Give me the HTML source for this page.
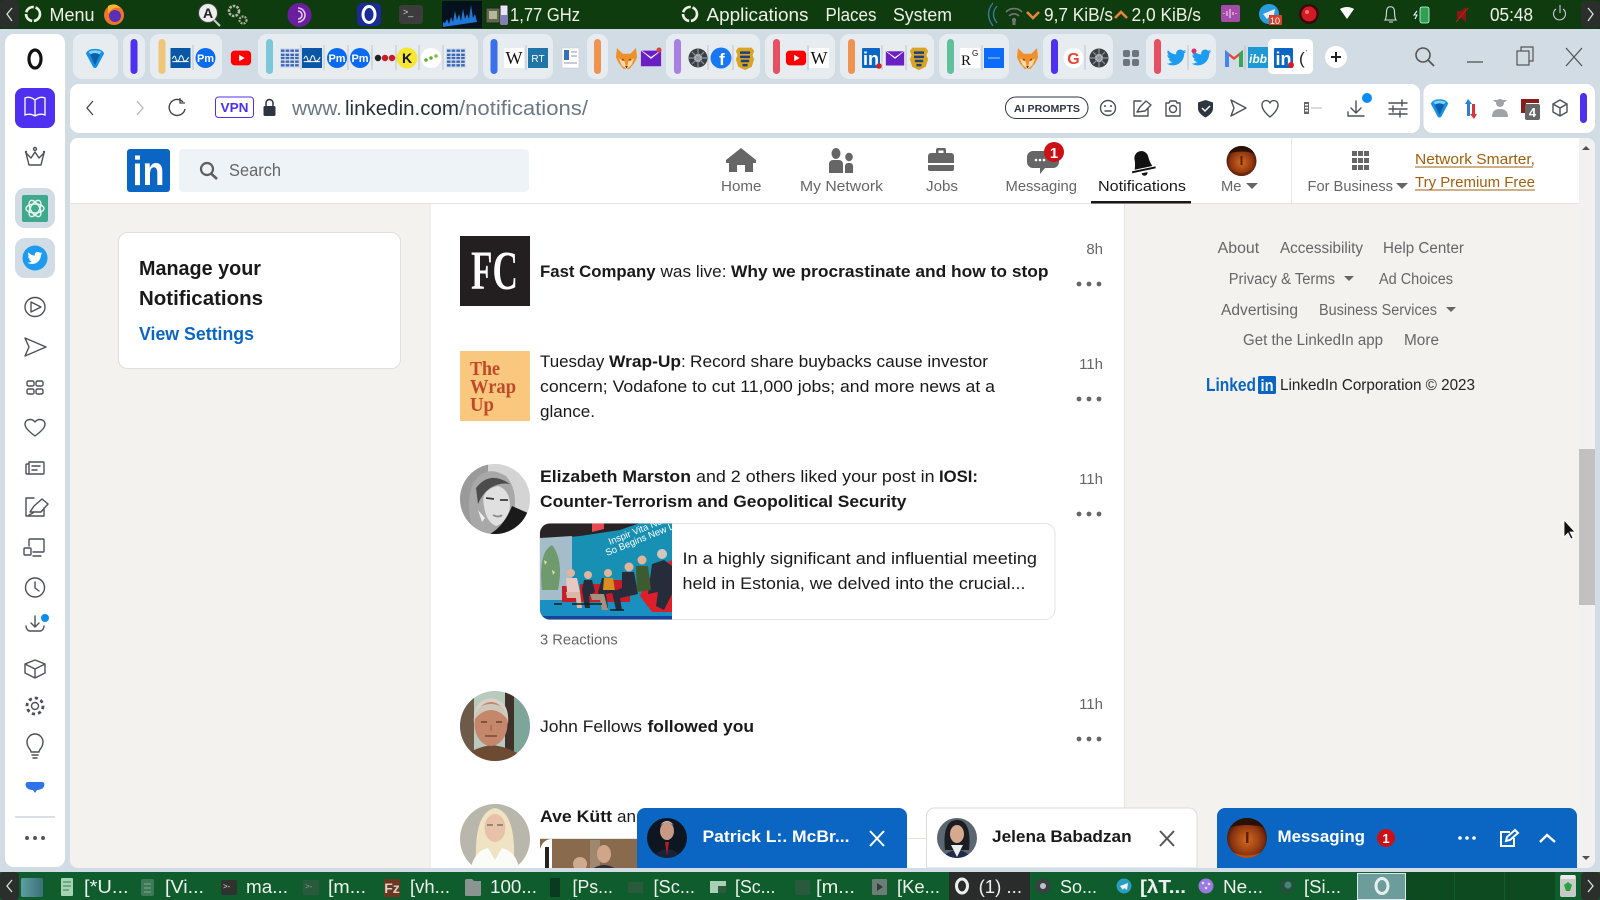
<!DOCTYPE html>
<html><head><meta charset="utf-8"><title>LinkedIn Notifications</title>
<style>
html,body{margin:0;padding:0;width:1600px;height:900px;overflow:hidden;background:#d2dce5}
svg{display:block;position:absolute;left:0;top:0}
text{font-family:"Liberation Sans","DejaVu Sans",sans-serif;white-space:pre}
.b{font-weight:700}
.t{fill:#191919;font-size:17px}
.tb{fill:#191919;font-size:17px;font-weight:700}
.nav{fill:#666;font-size:15px}
.fl{fill:#666;font-size:15.5px}
.tm{fill:#666;font-size:15px}
.pan{fill:#f0f0e8;font-size:18px}
.tsk{fill:#eef2ee;font-size:18px}
.ic{fill:none;stroke:#4c5159;stroke-width:1.4;stroke-linecap:round;stroke-linejoin:round}
.sep{stroke:#aab4bd;stroke-width:.7}
</style></head><body>
<svg width="1600" height="900" viewBox="0 0 1600 900" xmlns="http://www.w3.org/2000/svg">
<defs>
<symbol id="tw" viewBox="0 0 24 24"><path d="M23 4.900c-.8.4-1.700.6-2.600.8.900-.6 1.600-1.400 2-2.500-.9.500-1.800.9-2.900 1.100C18.700 3.400 17.500 2.800 16.200 2.800c-2.500 0-4.600 2.100-4.600 4.600 0 .4 0 .7.100 1C7.800 8.200 4.500 6.400 2.200 3.600c-.4.700-.6 1.400-.6 2.300 0 1.600.8 3 2 3.800-.8 0-1.500-.2-2.100-.6v.1c0 2.200 1.600 4.100 3.700 4.500-.4.100-.8.200-1.200.2-.3 0-.6 0-.9-.1.600 1.800 2.300 3.200 4.300 3.200-1.600 1.200-3.600 2-5.700 2-.4 0-.7 0-1.100-.1 2 1.300 4.500 2.100 7.100 2.100 8.500 0 13.100-7 13.100-13.100v-.6c.9-.6 1.700-1.500 2.300-2.400z"/></symbol>
<symbol id="fox" viewBox="0 0 24 24"><path d="M2 1 L8 7 H16 L22 1 L23 11 L20 17 L15 23 H9 L4 17 L1 11Z" fill="#f0902a"/><path d="M4 12 L10 15 L12 23 L14 15 L20 12 L17 19 L12 23 L7 19Z" fill="#fbd9a8"/><path d="M8 12l2 2-3 0zM16 12l-2 2 3 0z" fill="#6a3a10"/><path d="M10.500 20h3l-1.500 2z" fill="#33210f"/></symbol>
<symbol id="gem" viewBox="0 0 24 24"><path d="M2 7 Q4 2 12 2 Q20 2 22 7 L14 22 Q12 24 10 22Z" fill="#1492e6"/><path d="M6 7 Q12 4 18 7 L12 20Z" fill="#0d5fa8"/><path d="M5 5 Q12 2 19 5 L17 8 Q12 5 7 8Z" fill="#7fd4fa"/></symbol>
<symbol id="shd" viewBox="0 0 24 30"><path d="M4 2h16l3 4-2 5 2 5-3 9-8 4-8-4-3-9 2-5-2-5z" fill="#d9a520"/><path d="M6 8h12M6 13h12M7 18h10M9 23h6" stroke="#1d3e80" stroke-width="3"/></symbol>
<symbol id="mail" viewBox="0 0 24 24"><rect x="1" y="4" width="22" height="17" fill="#6a1fc4"/><path d="M1 4 L12 13 L23 4Z" fill="#fff"/><path d="M2 4 L12 11 L22 4Z" fill="#6a1fc4"/></symbol>
<symbol id="yt" viewBox="0 0 24 24"><rect x="1" y="4" width="22" height="16" rx="4" fill="#f00"/><path d="M10 8.500 L16 12 L10 15.500Z" fill="#fff"/></symbol>
<symbol id="wav" viewBox="0 0 22 22"><rect width="22" height="22" fill="#0a57a8"/><path d="M2 12c2-4 3-4 4 0s3 3 4-1 3-3 4 1 3 3 6-2M2 15h18" stroke="#fff" stroke-width="1.100" fill="none"/></symbol>
<symbol id="pat" viewBox="0 0 22 22"><rect width="22" height="22" fill="#d5dfef"/><path d="M1 3h20M1 7.500h20M1 11h20M1 15h20M1 19h20" stroke="#3f68b4" stroke-width="2.600" stroke-dasharray="4 1.200"/></symbol>
<symbol id="film" viewBox="0 0 22 22"><circle cx="12" cy="11" r="9.500" fill="#3a3f44"/><circle cx="12" cy="11" r="4" fill="#c6cbd0"/><path d="M12 2v18M3 11h18M6 5l12 12M18 5L6 17" stroke="#8d949a" stroke-width="1.200"/></symbol>
<clipPath id="pg"><rect x="70" y="138" width="1525" height="730" rx="8"/></clipPath>
<clipPath id="cE"><ellipse cx="495" cy="499" rx="35" ry="35"/></clipPath>
<clipPath id="cJ"><ellipse cx="495" cy="726" rx="35" ry="35"/></clipPath>
<clipPath id="cA"><ellipse cx="495" cy="839" rx="35" ry="35"/></clipPath>
<clipPath id="cI"><path d="M550 523.500H672V619.500H550a10 10 0 0 1-10-10V533.500a10 10 0 0 1 10-10Z"/></clipPath>
<clipPath id="cP"><circle cx="667" cy="838" r="20"/></clipPath>
<clipPath id="cB"><circle cx="957" cy="838" r="20"/></clipPath>
<clipPath id="cM"><circle cx="1247" cy="838" r="20"/></clipPath>
<clipPath id="cU"><circle cx="1241.500" cy="161" r="15"/></clipPath>
<radialGradient id="face" cx=".5" cy=".55" r=".6"><stop offset="0" stop-color="#d56a1e"/><stop offset=".65" stop-color="#8a3310"/><stop offset="1" stop-color="#1f0c05"/></radialGradient>
<linearGradient id="teal" x1="0" x2="1"><stop offset="0" stop-color="#5f9ea0"/><stop offset="1" stop-color="#3c6f78"/></linearGradient>
</defs>

<rect width="1600" height="900" fill="#d2dce5"/>

<!-- TOP PANEL -->
<rect width="1600" height="29" fill="#0e3c0e"/>
<rect x="0" y="0" width="19" height="28" rx="4" fill="#2b2f2b"/>
<path d="M12 8 L7 14 L12 21" stroke="#ddd" stroke-width="1.300" fill="none"/>
<circle cx="33" cy="14" r="7" fill="none" stroke="#f0f0e8" stroke-width="2.600" stroke-dasharray="10 1.800"/>
<text class="pan" x="49.500" y="21" textLength="45" lengthAdjust="spacingAndGlyphs">Menu</text>
<circle cx="114" cy="15" r="10" fill="#f0742a"/><circle cx="115" cy="16" r="6" fill="#5a2fb8"/><path d="M108 6 Q116 2 120 8 Q112 6 108 14Z" fill="#ffb52a"/>
<circle cx="208" cy="13" r="9.500" fill="#eee" stroke="#444" stroke-width="1"/><text x="208" y="18" text-anchor="middle" class="b" font-size="14" fill="#222">A</text><path d="M214 20 L220 26" stroke="#ccc" stroke-width="2"/>
<circle cx="234" cy="11" r="5" fill="none" stroke="#b5b5a8" stroke-width="2.600" stroke-dasharray="2.500 1.200"/><circle cx="243" cy="20" r="3.500" fill="none" stroke="#a9a99c" stroke-width="2.200" stroke-dasharray="2 1"/>
<circle cx="299.500" cy="15" r="12" fill="#6b1f9e"/><path d="M298 8a7 7 0 0 1 0 14M298 11a4 4 0 0 1 0 8" stroke="#e0c8f0" stroke-width="1.600" fill="none"/>
<rect x="357" y="3" width="24" height="23" rx="5" fill="#1a2a9a"/><ellipse cx="369" cy="14.500" rx="6" ry="8" fill="none" stroke="#fff" stroke-width="3"/>
<rect x="399" y="5" width="24" height="19" rx="3" fill="#3c3c3c"/><text x="403" y="15" font-size="9" fill="#ddd">&gt;_</text>
<rect x="442" y="1" width="40" height="27" fill="#05121e"/>
<path d="M443 27V22l2 1 2-4 2 5 2-7 2 5 2-11 2 9 2-6 2 7 2-12 2 10 2-5 2 5 2-14 2 13 2-4 2 8z" fill="#1e78d8"/>
<rect x="486" y="8" width="14" height="15" fill="#5f6a4a" stroke="#222"/><rect x="489" y="11" width="8" height="8" fill="#b5b89a"/>
<rect x="500" y="5" width="8" height="20" fill="#e8e8f4" stroke="#222"/><rect x="501" y="15" width="6" height="9" fill="#7f7fc0"/>
<text class="pan" x="510" y="21" textLength="70" lengthAdjust="spacingAndGlyphs">1,77 GHz</text>
<circle cx="690" cy="14" r="7" fill="none" stroke="#f0f0e8" stroke-width="2.600" stroke-dasharray="10 1.800"/>
<text class="pan" x="706.500" y="21" textLength="102" lengthAdjust="spacingAndGlyphs">Applications</text>
<text class="pan" x="825.500" y="21" textLength="51" lengthAdjust="spacingAndGlyphs">Places</text>
<text class="pan" x="893" y="21" textLength="59" lengthAdjust="spacingAndGlyphs">System</text>
<path d="M993 3Q984 14 993 26M997 6Q990 14 997 23" stroke="#3c7ba8" stroke-width="1.300" fill="none"/>
<path d="M1006 12a11 11 0 0 1 16 0M1009 16a7 7 0 0 1 10 0" stroke="#777" stroke-width="1.600" fill="none"/><circle cx="1014" cy="20" r="2" fill="#777"/><rect x="1012.500" y="21" width="3" height="4" fill="#777"/>
<path d="M1027 12 L1033 18 L1039 12" stroke="#e8843a" stroke-width="2.600" fill="none"/>
<text class="pan" x="1044" y="21" textLength="69" lengthAdjust="spacingAndGlyphs">9,7 KiB/s</text>
<path d="M1115 18 L1121 12 L1127 18" stroke="#e8843a" stroke-width="2.600" fill="none"/>
<text class="pan" x="1131.500" y="21" textLength="69.500" lengthAdjust="spacingAndGlyphs">2,0 KiB/s</text>
<rect x="1221" y="5" width="19" height="17" rx="2" fill="#a44ca8"/><path d="M1224 14v-1M1227 16v-5M1230 18v-9M1233 15v-3M1236 14v-1" stroke="#e8d0f0" stroke-width="1.200"/>
<circle cx="1269" cy="14" r="10" fill="#2a9de0"/><path d="M1263 14l12-5-2 11-4-3-2 2z" fill="#eee"/><rect x="1269" y="15" width="13" height="10" fill="#d8402c"/><text x="1270" y="24" font-size="9" fill="#fff">10</text>
<circle cx="1309" cy="14" r="10" fill="#3a0a0a"/><circle cx="1309" cy="14" r="7.500" fill="#d01a24"/><circle cx="1307" cy="12" r="2" fill="#f07078"/>
<path d="M1340 9 Q1347 5 1354 9 L1347 19Z" fill="#fff"/>
<path d="M1385 20c2-2 1-9 2-11 1-3 6-3 7 0 1 2 0 9 2 11zM1389 22h4" stroke="#dde" stroke-width="1.100" fill="none"/>
<rect x="1420" y="7" width="9" height="16" rx="2" fill="#2fa050" stroke="#cfe" stroke-width=".8"/><path d="M1417 11l-3 4h3l-2 4" stroke="#dff" stroke-width="1.100" fill="none"/>
<path d="M1457 11h4l5-4v15l-5-4h-4z" fill="#8a1616"/><path d="M1468 8 L1456 22" stroke="#c01c1c" stroke-width="1.100"/>
<text class="pan" x="1490" y="21" textLength="43" lengthAdjust="spacingAndGlyphs">05:48</text>
<path d="M1556 9a6 6 0 1 0 7 0M1560 5v8" stroke="#ccd" stroke-width="1.100" fill="none"/>
<rect x="1581" y="1" width="19" height="27" rx="4" fill="#2b2f2b"/><path d="M1588 8 L1593 14 L1588 21" stroke="#ddd" stroke-width="1.300" fill="none"/>

<!-- TAB GROUPS -->
<g fill="#e7ecf0">
<rect x="73" y="34" width="45" height="45" rx="9"/>
<rect x="123" y="34" width="22" height="45" rx="9"/>
<rect x="150" y="34" width="72" height="45" rx="9"/>
<rect x="258" y="34" width="220" height="45" rx="9"/>
<rect x="483" y="34" width="70" height="45" rx="9"/>
<rect x="587" y="34" width="21" height="45" rx="9"/>
<rect x="666" y="34" width="94" height="45" rx="9"/>
<rect x="765" y="34" width="70" height="45" rx="9"/>
<rect x="840" y="34" width="94" height="45" rx="9"/>
<rect x="939" y="34" width="70" height="45" rx="9"/>
<rect x="1043" y="34" width="70" height="45" rx="9"/>
<rect x="1146" y="34" width="70" height="45" rx="9"/>
</g>
<rect x="130.500" y="39" width="7" height="35" rx="3.500" fill="#4f2ff0"/>
<rect x="158.500" y="39" width="7" height="35" rx="3.500" fill="#efc578"/>
<rect x="266" y="39" width="7" height="35" rx="3.500" fill="#7cc8d8"/>
<rect x="490.500" y="39" width="7" height="35" rx="3.500" fill="#3a70ea"/>
<rect x="594" y="39" width="7" height="35" rx="3.500" fill="#ef9450"/>
<rect x="674" y="39" width="7" height="35" rx="3.500" fill="#a880e0"/>
<rect x="773" y="39" width="7" height="35" rx="3.500" fill="#e55062"/>
<rect x="848" y="39" width="7" height="35" rx="3.500" fill="#ef9450"/>
<rect x="947" y="39" width="7" height="35" rx="3.500" fill="#5fc09a"/>
<rect x="1051" y="39" width="7" height="35" rx="3.500" fill="#4f2ff0"/>
<rect x="1154" y="39" width="7" height="35" rx="3.500" fill="#e55062"/>
<use href="#gem" x="84" y="47" width="22" height="22"/>
<use href="#wav" x="170.500" y="48" width="20" height="20"/><line class="sep" x1="193" x2="193" y1="45" y2="70"/>
<circle cx="205.500" cy="58" r="10" fill="#0b6bf0"/><text x="205.500" y="62" text-anchor="middle" font-size="11" class="b" fill="#fff">Pm</text>
<use href="#yt" x="230" y="47" width="22" height="22"/>
<use href="#pat" x="280" y="48" width="20" height="20"/><line class="sep" x1="301" x2="301" y1="45" y2="70"/>
<use href="#wav" x="302" y="48" width="20" height="20"/><line class="sep" x1="324" x2="324" y1="45" y2="70"/>
<circle cx="337" cy="58" r="10" fill="#0b6bf0"/><text x="337" y="62" text-anchor="middle" font-size="11" class="b" fill="#fff">Pm</text><line class="sep" x1="348" x2="348" y1="45" y2="70"/>
<circle cx="360" cy="58" r="10" fill="#0b6bf0"/><text x="360" y="62" text-anchor="middle" font-size="11" class="b" fill="#fff">Pm</text><line class="sep" x1="372" x2="372" y1="45" y2="70"/>
<circle cx="378" cy="58" r="3.200" fill="#222"/><circle cx="385" cy="58" r="3.200" fill="#c81d25"/><circle cx="392" cy="58" r="3.200" fill="#c81d25"/><line class="sep" x1="396" x2="396" y1="45" y2="70"/>
<circle cx="407" cy="58" r="10.500" fill="#f7e733"/><text x="407" y="63" text-anchor="middle" font-size="14" class="b" fill="#111">K</text><line class="sep" x1="419" x2="419" y1="45" y2="70"/>
<circle cx="431" cy="58" r="10" fill="#fff"/><circle cx="426" cy="60" r="1.800" fill="#6a3"/><circle cx="431" cy="58" r="1.800" fill="#6a3"/><circle cx="436" cy="56" r="1.800" fill="#8b4"/><line class="sep" x1="443" x2="443" y1="45" y2="70"/>
<use href="#pat" x="446" y="48" width="20" height="20"/>
<rect x="504" y="48" width="20" height="20" fill="#fff"/><text x="514" y="64" text-anchor="middle" font-size="18" fill="#111" style="font-family:'Liberation Serif',serif">W</text><line class="sep" x1="526" x2="526" y1="45" y2="70"/>
<rect x="528" y="48" width="20" height="20" fill="#1f74a8"/><text x="538" y="62" text-anchor="middle" font-size="10" fill="#fff">RT</text>
<rect x="562" y="48" width="17" height="20" fill="#fff" stroke="#ccd" stroke-width=".6"/><rect x="564" y="50" width="5" height="10" fill="#3a70b8"/><path d="M571 52h6M571 56h6M564 63h13" stroke="#aab" stroke-width="1.200"/>
<use href="#fox" x="615" y="47" width="23" height="23"/>
<use href="#mail" x="640" y="47" width="22" height="22"/><circle cx="659" cy="50" r="2.500" fill="#d84040"/>
<use href="#film" x="686" y="47" width="22" height="22"/><line class="sep" x1="708" x2="708" y1="45" y2="70"/>
<circle cx="721" cy="58" r="10.500" fill="#1877f2"/><text x="722" y="65" text-anchor="middle" font-size="17" class="b" fill="#fff">f</text><line class="sep" x1="733" x2="733" y1="45" y2="70"/>
<use href="#shd" x="735" y="46" width="20" height="25"/>
<use href="#yt" x="785" y="47" width="22" height="22"/><line class="sep" x1="808" x2="808" y1="45" y2="70"/>
<rect x="809" y="48" width="20" height="20" fill="#fff"/><text x="819" y="64" text-anchor="middle" font-size="18" fill="#111" style="font-family:'Liberation Serif',serif">W</text>
<rect x="862" y="48" width="18" height="20" rx="1" fill="#0a66c2"/><text x="871" y="65" text-anchor="middle" font-size="18" class="b" fill="#fff">in</text><circle cx="879" cy="66" r="2.800" fill="#d81f26"/><line class="sep" x1="882" x2="882" y1="45" y2="70"/>
<use href="#mail" x="885" y="48" width="20" height="20"/><line class="sep" x1="906" x2="906" y1="45" y2="70"/>
<use href="#shd" x="909" y="46" width="20" height="25"/>
<rect x="960" y="48" width="20" height="20" fill="#fff"/><text x="961" y="65" font-size="15" fill="#111" style="font-family:'Liberation Serif',serif">R</text><text x="972" y="56" font-size="8" fill="#111">G</text><line class="sep" x1="982" x2="982" y1="45" y2="70"/>
<rect x="984" y="48" width="20" height="20" fill="#0b6bfb"/><path d="M988 58h12" stroke="#bcd" stroke-width="1"/>
<use href="#fox" x="1016" y="47" width="23" height="23"/>
<circle cx="1073.500" cy="58" r="10" fill="#fff"/><text x="1073.500" y="64" text-anchor="middle" font-size="16" class="b" fill="#ea4335">G</text><line class="sep" x1="1085" x2="1085" y1="45" y2="70"/>
<use href="#film" x="1087" y="47" width="22" height="22"/>
<g fill="#6d747b"><rect x="1123" y="50" width="7" height="7" rx="2"/><rect x="1132" y="50" width="7" height="7" rx="2"/><rect x="1123" y="59" width="7" height="7" rx="2"/><rect x="1132" y="59" width="7" height="7" rx="2"/></g>
<use href="#tw" x="1166" y="47" width="21" height="21" fill="#1d9bf0"/><line class="sep" x1="1188" x2="1188" y1="45" y2="70"/>
<use href="#tw" x="1191" y="47" width="21" height="21" fill="#1d9bf0"/><circle cx="1194" cy="51" r="2.500" fill="#e0306a"/>
<path d="M1225 67V50l9 7 9-7v17h-4V56l-5 4-5-4v11z" fill="#ea4335"/><path d="M1225 50v17h4V53z" fill="#4285f4"/><path d="M1243 50v17h-4V53z" fill="#34a853"/><line class="sep" x1="1245" x2="1245" y1="45" y2="70"/>
<rect x="1248" y="47" width="20" height="21" fill="#1d9ad6"/><text x="1258" y="63" text-anchor="middle" font-size="12" class="b" font-style="italic" fill="#fff">ibb</text>
<rect x="1268" y="39" width="45" height="35" rx="5" fill="#fff"/>
<rect x="1274" y="48" width="19" height="20" rx="1" fill="#0a66c2"/><text x="1283.500" y="65" text-anchor="middle" font-size="18" class="b" fill="#fff">in</text><circle cx="1291" cy="65" r="3" fill="#d81f26"/>
<text x="1299" y="64" font-size="17" fill="#222">(</text><text x="1306" y="55" font-size="7" fill="#555">'</text>
<circle cx="1336" cy="57" r="11" fill="#fff"/><path d="M1331 57h10M1336 52v10" stroke="#222" stroke-width="2"/>
<circle cx="1423" cy="55" r="7" fill="none" stroke="#555" stroke-width="1.600"/><path d="M1428 60 L1434 66" stroke="#555" stroke-width="1.800"/>
<path d="M1467 62h16" stroke="#555" stroke-width="1.300"/>
<rect x="1517" y="51" width="12" height="14" fill="none" stroke="#555" stroke-width="1.200"/><path d="M1521 51v-4h12v14h-4" fill="none" stroke="#555" stroke-width="1.200"/>
<path d="M1566 48 L1582 66M1582 48 L1566 66" stroke="#555" stroke-width="1.300"/>

<!-- SIDEBAR -->
<rect x="5" y="34" width="60" height="833" rx="9" fill="#fff"/>
<ellipse cx="35" cy="59" rx="6" ry="9" fill="none" stroke="#111" stroke-width="3.200"/>
<rect x="15" y="88" width="40" height="40" rx="8" fill="#4f2ff0"/>
<path d="M35 100 Q30 96 25 98V115Q30 113 35 116Q40 113 45 115V98Q40 96 35 100ZM35 100V116" fill="none" stroke="#fff" stroke-width="1.300"/>
<path class="ic" d="M26 153 L29 165 H41 L44 153 L39 158 L35 152 L31 158 Z"/><circle class="ic" cx="35" cy="149" r="1.500"/><circle cx="26" cy="152" r="1.200" fill="#4c5159"/><circle cx="44" cy="152" r="1.200" fill="#4c5159"/>
<rect x="15" y="188" width="40" height="40" rx="10" fill="#d2dce5"/>
<rect x="22" y="195" width="26" height="27" rx="2" fill="#3fa98d"/>
<g fill="none" stroke="#e8f6f0" stroke-width="1.400"><ellipse cx="35" cy="208.500" rx="9" ry="4.500"/><ellipse cx="35" cy="208.500" rx="9" ry="4.500" transform="rotate(60 35 208.500)"/><ellipse cx="35" cy="208.500" rx="9" ry="4.500" transform="rotate(120 35 208.500)"/></g>
<rect x="15" y="238" width="40" height="40" rx="10" fill="#d2dce5"/>
<circle cx="35" cy="258" r="12.500" fill="#1d9bf0"/><use href="#tw" x="27" y="250" width="16" height="16" fill="#fff"/>
<ellipse class="ic" cx="35" cy="307" rx="10" ry="9.500"/><path class="ic" d="M31 302 L41 307 L31 312Z"/>
<path class="ic" d="M25 338 L46 347 L25 356 L29 347 Z"/>
<g class="ic"><rect x="27" y="381" width="7" height="5" rx="1.500"/><rect x="36" y="381" width="7" height="5" rx="1.500"/><rect x="27" y="389" width="7" height="5" rx="1.500"/><rect x="36" y="389" width="7" height="5" rx="1.500"/></g>
<path class="ic" d="M35 436 C27 430 25 427 25 424 C25 419 32 418 35 422 C38 418 45 419 45 424 C45 427 43 430 35 436Z"/>
<path class="ic" d="M29 462h14a1 1 0 0 1 1 1v10a1 1 0 0 1-1 1H29zM29 464h-2a1 1 0 0 0-1 1v8a1 1 0 0 0 1 1h2M32 466h8M32 470h5"/>
<path class="ic" d="M34 498H26V516H44V508M30 512l4-6 8-7 6 5-7 8zM33 513l-4 2"/>
<path class="ic" d="M29 546V540a1 1 0 0 1 1-1h13a1 1 0 0 1 1 1v11a1 1 0 0 1-1 1H33M33 556h8"/><rect class="ic" x="24" y="548" width="7" height="7" rx="1"/>
<circle class="ic" cx="35" cy="587.500" r="9.500"/><path class="ic" d="M35 582v6l4 3"/>
<path class="ic" d="M35 616v11M31 623l4 4 4-4M26 626c0 3 2 5 4 5h10c2 0 4-2 4-5"/><circle cx="45" cy="618" r="4" fill="#0a8cf0"/>
<path class="ic" d="M35 660l10 4v9l-10 5-10-5v-9zM25 664l10 5 10-5M35 669v9"/>
<circle cx="35" cy="706" r="3.500" class="ic"/><circle cx="35" cy="706" r="8" fill="none" stroke="#4c5159" stroke-width="2.800" stroke-dasharray="3.200 3"/>
<path class="ic" d="M31 752c0-3-4-4-4-10a8 8 0 0 1 16 0c0 6-4 7-4 10zM32 755h6M33 758h4"/>
<path d="M28 782h14c3 0 3 4 1 6-1 1-4 2-6 2l-2 3-2-3c-3 0-5-1-6-2-2-2-2-6 1-6z" fill="#2e74e8"/>
<line x1="15" x2="55" y1="817" y2="817" stroke="#b8bfc6"/>
<g fill="#555"><circle cx="27" cy="838" r="2"/><circle cx="35" cy="838" r="2"/><circle cx="43" cy="838" r="2"/></g>

<!-- ADDRESS BAR -->
<rect x="70" y="84" width="1350" height="49" rx="9" fill="#fff"/>
<rect x="1423.500" y="84" width="171.500" height="49" rx="9" fill="#fff"/>
<path d="M93 101 L87 108 L93 115" stroke="#444" stroke-width="1.300" fill="none"/>
<path d="M137 101 L143 108 L137 115" stroke="#b3b9bf" stroke-width="1.300" fill="none"/>
<path d="M183 102 A8 8 0 1 0 185 109" stroke="#444" stroke-width="1.400" fill="none"/><path d="M180 98v5h5" stroke="#444" stroke-width="1.300" fill="none"/>
<rect x="215.500" y="97" width="38" height="20.500" rx="3" fill="none" stroke="#4f2ff0" stroke-width="1"/>
<text x="220.500" y="112" font-size="13" class="b" fill="#4f2ff0" textLength="28" lengthAdjust="spacingAndGlyphs">VPN</text>
<rect x="263.500" y="106" width="12" height="10" rx="1.500" fill="#2d3540"/><path d="M266 106v-3a3.500 3.500 0 0 1 7 0v3" stroke="#2d3540" stroke-width="1.500" fill="none"/>
<text x="292" y="115" font-size="20" fill="#6b7885" textLength="50" lengthAdjust="spacingAndGlyphs">www.</text>
<text x="345" y="115" font-size="20" fill="#2b3038" textLength="114" lengthAdjust="spacingAndGlyphs">linkedin.com</text>
<text x="459" y="115" font-size="20" fill="#6b7885" textLength="129" lengthAdjust="spacingAndGlyphs">/notifications/</text>
<rect x="1005.500" y="97" width="82.500" height="21.500" rx="10.500" fill="none" stroke="#2d3540" stroke-width="1"/>
<text x="1014" y="112" font-size="10.500" class="b" fill="#2d3540" textLength="66" lengthAdjust="spacingAndGlyphs">AI PROMPTS</text>
<circle class="ic" cx="1108" cy="108" r="7.500"/><circle cx="1105" cy="106" r="1" fill="#4c5159"/><circle cx="1111" cy="106" r="1" fill="#4c5159"/><path class="ic" d="M1105 111h6"/>
<path class="ic" d="M1141 101H1134V116H1148V108M1137 112l3-5 6-6 5 4-6 6z"/>
<path class="ic" d="M1166 103h3l1-2h6l1 2h3v13h-14z"/><circle class="ic" cx="1173" cy="109" r="3.500"/>
<path d="M1205.500 100l7.500 2.500v6c0 4-4 7-7.500 9-3.500-2-7.500-5-7.500-9v-6z" fill="#2d3540"/><path d="M1202 108l3 3 5-5" stroke="#fff" stroke-width="1.500" fill="none"/>
<path class="ic" d="M1231 100 L1246 108 L1231 116 L1234 108Z"/>
<path class="ic" d="M1270 117 C1264 112 1262 108 1262 105 C1262 100 1268 99 1270 103 C1272 99 1278 100 1278 105 C1278 108 1276 112 1270 117Z"/>
<rect x="1304" y="102" width="5" height="12" fill="#666"/><rect x="1305" y="104" width="3" height="1.500" fill="#fff"/><rect x="1305" y="107" width="3" height="1.500" fill="#fff"/><rect x="1305" y="110" width="3" height="1.500" fill="#fff"/><path d="M1311 108h11" stroke="#ccc" stroke-width="1.500"/>
<path class="ic" d="M1356 101v12M1351 108l5 5 5-5M1348 112v4h16"/><circle cx="1367" cy="98" r="5" fill="#0a8cf0"/>
<path class="ic" d="M1389 103h18M1389 109h18M1389 114h18M1402 100v6M1393 106v6M1400 111v6"/>
<use href="#gem" x="1429" y="97" width="21" height="22"/>
<path d="M1468 99l-3 5h2v12h3v-12h2z" fill="#2c7fd8"/><path d="M1474 119l3-5h-2v-10h-3v10h-2z" fill="#d8343a"/>
<circle cx="1500" cy="103" r="4" fill="#9ea3a8"/><path d="M1493 100h14l-2 2h-10zM1492 117c0-6 3-8 8-8s8 2 8 8z" fill="#9ea3a8"/>
<path d="M1521 99h18v4h-18z" fill="#8a1c1c"/><path d="M1521 103h5v10h-5z" fill="#8a1c1c"/><rect x="1525" y="104" width="15" height="16" rx="2" fill="#666"/><text x="1532.500" y="117" text-anchor="middle" font-size="13" class="b" fill="#fff">4</text>
<path class="ic" d="M1560 100l7 4v8l-7 4-7-4v-8zM1553 104l7 4 7-4M1560 108v8"/>
<rect x="1580" y="93" width="7" height="30" rx="3.500" fill="#4f2ff0"/>

<!-- PAGE -->
<g clip-path="url(#pg)">
<rect x="70" y="138" width="1525" height="730" fill="#f3f2ef"/>
<rect x="70" y="138" width="1509" height="65" fill="#fff"/>
<rect x="70" y="203" width="1509" height="1" fill="#e4e3e0"/>
<!-- logo -->
<rect x="127" y="149" width="43" height="43" rx="3" fill="#0a66c2"/>
<text x="132.500" y="185" font-size="41" class="b" fill="#fff" textLength="32" lengthAdjust="spacingAndGlyphs">in</text>
<rect x="179" y="149" width="350" height="43" rx="4" fill="#eef3f8"/>
<circle cx="207" cy="169" r="6" fill="none" stroke="#5e5e5e" stroke-width="2.200"/><path d="M211.500 174 L217 179" stroke="#5e5e5e" stroke-width="2.600"/>
<text x="229" y="176" font-size="17.500" fill="#666" textLength="52" lengthAdjust="spacingAndGlyphs">Search</text>
<!-- nav icons -->
<path fill="#666" d="M741 148 L756 160 V163 H753 V172 H745 V165 H737 V172 H729 V163 H726 V160 Z"/>
<g fill="#666"><ellipse cx="836" cy="153.500" rx="4.500" ry="5.500"/><path d="M829 173v-9a4 4 0 0 1 4-4h6a4 4 0 0 1 4 4v9z"/><ellipse cx="849" cy="157" rx="3.800" ry="4.200"/><path d="M845 173v-7a3 3 0 0 1 3-3h2a3 3 0 0 1 3 3v7z"/></g>
<g fill="#666"><path d="M936 153v-3a2 2 0 0 1 2-2h6a2 2 0 0 1 2 2v3h-2.500v-2.500h-5v2.500z"/><path d="M928 156a3 3 0 0 1 3-3h20a3 3 0 0 1 3 3v7h-26z"/><path d="M928 165h26v4a2 2 0 0 1-2 2h-22a2 2 0 0 1-2-2z"/></g>
<path fill="#666" d="M1033 151h20a6 6 0 0 1 6 6v5a6 6 0 0 1-6 6h-8l-5 6v-6h-7a6 6 0 0 1-6-6v-5a6 6 0 0 1 6-6z"/>
<g fill="#fff"><circle cx="1036" cy="160" r="1.300"/><circle cx="1040" cy="160" r="1.300"/><circle cx="1044" cy="160" r="1.300"/></g>
<circle cx="1054" cy="152" r="10" fill="#cc1016"/><text x="1054" y="158" text-anchor="middle" font-size="15" class="b" fill="#fff">1</text>
<g transform="rotate(-12 1142 161)" fill="#111"><path d="M1133 168c1-3 2-6 2-10a7 7 0 0 1 14 0c0 4 1 7 2 10z"/><path d="M1130 169h24v2h-24z"/><path d="M1139 173h6a3 3 0 0 1-6 0z"/></g>
<circle cx="1241.500" cy="161" r="15" fill="url(#face)"/>
<g clip-path="url(#cU)"><path d="M1227 146h29v8q-14-5-29 0z" fill="#2a1006"/><path d="M1240.500 156h2v9h-2z" fill="#5a2208"/><path d="M1232 170q9 6 19 0v8h-19z" fill="#6a280c"/></g>
<g fill="#666"><rect x="1352" y="151" width="5" height="5"/><rect x="1358" y="151" width="5" height="5"/><rect x="1364" y="151" width="5" height="5"/><rect x="1352" y="158" width="5" height="5"/><rect x="1358" y="158" width="5" height="5"/><rect x="1364" y="158" width="5" height="5"/><rect x="1352" y="165" width="5" height="5"/><rect x="1358" y="165" width="5" height="5"/><rect x="1364" y="165" width="5" height="5"/></g>
<!-- nav labels -->
<text class="nav" x="721" y="191" textLength="40.500" lengthAdjust="spacingAndGlyphs">Home</text>
<text class="nav" x="800" y="191" textLength="83" lengthAdjust="spacingAndGlyphs">My Network</text>
<text class="nav" x="926" y="191" textLength="32" lengthAdjust="spacingAndGlyphs">Jobs</text>
<text class="nav" x="1005.500" y="191" textLength="71.500" lengthAdjust="spacingAndGlyphs">Messaging</text>
<text class="nav" x="1098" y="191" textLength="88" lengthAdjust="spacingAndGlyphs" style="fill:#191919">Notifications</text>
<text class="nav" x="1221" y="191" textLength="20.500" lengthAdjust="spacingAndGlyphs">Me</text>
<path d="M1246 183h12l-6 6z" fill="#666"/>
<rect x="1091" y="201" width="100" height="2.500" fill="#191919"/>
<rect x="1291" y="138" width="1" height="65" fill="#e8e8e6"/>
<text class="nav" x="1307.500" y="191" textLength="85.500" lengthAdjust="spacingAndGlyphs">For Business</text>
<path d="M1396 183h12l-6 6z" fill="#666"/>
<text x="1415" y="164" font-size="15" fill="#a0600c" textLength="120" lengthAdjust="spacingAndGlyphs">Network Smarter,</text>
<rect x="1415" y="166.500" width="118" height="1" fill="#a0600c"/>
<text x="1415" y="187" font-size="15" fill="#a0600c" textLength="120" lengthAdjust="spacingAndGlyphs">Try Premium Free</text>
<rect x="1415" y="189.500" width="120" height="1" fill="#a0600c"/>

<!-- manage card -->
<rect x="118.500" y="232.500" width="282" height="136" rx="9" fill="#fff" stroke="#e0dfdc"/>
<text x="139" y="275" font-size="20" class="b" fill="#191919" textLength="122" lengthAdjust="spacingAndGlyphs">Manage your</text>
<text x="139" y="305" font-size="20" class="b" fill="#191919" textLength="124" lengthAdjust="spacingAndGlyphs">Notifications</text>
<text x="139" y="340" font-size="18" class="b" fill="#0a66c2" textLength="115" lengthAdjust="spacingAndGlyphs">View Settings</text>

<!-- feed -->
<rect x="430" y="204" width="694" height="664" fill="#fff"/>
<rect x="429.500" y="204" width="1" height="664" fill="#e4e3e0"/>
<rect x="1124" y="204" width="1" height="664" fill="#e4e3e0"/>

<rect x="460" y="236" width="70" height="70" fill="#231f20"/>
<text x="471" y="289" font-size="55" fill="#fff" class="b" style="font-family:'Liberation Serif',serif" textLength="47" lengthAdjust="spacingAndGlyphs">FC</text>
<text class="tb" x="540" y="277" textLength="115.600" lengthAdjust="spacingAndGlyphs">Fast Company</text>
<text class="t" x="660.500" y="277" textLength="66" lengthAdjust="spacingAndGlyphs">was live:</text>
<text class="tb" x="731" y="277" textLength="317.500" lengthAdjust="spacingAndGlyphs">Why we procrastinate and how to stop</text>
<text class="tm" x="1103" y="254" text-anchor="end">8h</text>
<g fill="#666"><circle cx="1079" cy="284" r="2.400"/><circle cx="1089" cy="284" r="2.400"/><circle cx="1099" cy="284" r="2.400"/></g>

<rect x="460" y="351" width="70" height="70" fill="#fac77e"/>
<g fill="#c0492a" font-size="20" font-weight="700">
<text x="470" y="375" textLength="30" lengthAdjust="spacingAndGlyphs" style="font-family:'Liberation Serif',serif">The</text>
<text x="470" y="393" textLength="46" lengthAdjust="spacingAndGlyphs" style="font-family:'Liberation Serif',serif">Wrap</text>
<text x="470" y="411" textLength="24" lengthAdjust="spacingAndGlyphs" style="font-family:'Liberation Serif',serif">Up</text></g>
<text class="t" x="540" y="367" textLength="64.300" lengthAdjust="spacingAndGlyphs">Tuesday</text>
<text class="tb" x="609" y="367" textLength="72" lengthAdjust="spacingAndGlyphs">Wrap-Up</text>
<text class="t" x="681" y="367">:</text>
<text class="t" x="690" y="367" textLength="298" lengthAdjust="spacingAndGlyphs">Record share buybacks cause investor</text>
<text class="t" x="540" y="392" textLength="455" lengthAdjust="spacingAndGlyphs">concern; Vodafone to cut 11,000 jobs; and more news at a</text>
<text class="t" x="540" y="417" textLength="55" lengthAdjust="spacingAndGlyphs">glance.</text>
<text class="tm" x="1103" y="369" text-anchor="end">11h</text>
<g fill="#666"><circle cx="1079" cy="399" r="2.400"/><circle cx="1089" cy="399" r="2.400"/><circle cx="1099" cy="399" r="2.400"/></g>

<g clip-path="url(#cE)">
<rect x="460" y="464" width="70" height="70" fill="#d4d4d4"/>
<rect x="460" y="464" width="28" height="70" fill="#9a9a9a"/>
<path d="M474 534 Q464 500 474 482 Q486 464 506 476 Q518 490 514 512 L506 534Z" fill="#a8a8a8"/>
<path d="M476 488 Q490 470 510 484 Q500 482 490 488 Q482 494 478 504Z" fill="#4c4c4c"/>
<path d="M484 506 Q480 490 498 486 Q510 490 510 506 Q508 522 496 526 Q486 522 484 506Z" fill="#e0e0e0"/>
<path d="M486 498l8 1M500 500l8 0" stroke="#3a3a3a" stroke-width="1.700"/>
<path d="M493 515q6 3 9 0" stroke="#8a8a8a" stroke-width="1.800" fill="none"/>
<path d="M478 510l4 12 3-4z" fill="#eee"/>
<path d="M490 534 Q504 526 512 506 L530 514 V534Z" fill="#1a1a1a"/>
</g>
<text class="tb" x="540" y="482" textLength="151" lengthAdjust="spacingAndGlyphs">Elizabeth Marston</text>
<text class="t" x="696" y="482" textLength="238.600" lengthAdjust="spacingAndGlyphs">and 2 others liked your post in</text>
<text class="tb" x="939" y="482" textLength="39" lengthAdjust="spacingAndGlyphs">IOSI:</text>
<text class="tb" x="540" y="507" textLength="366.500" lengthAdjust="spacingAndGlyphs">Counter-Terrorism and Geopolitical Security</text>
<text class="tm" x="1103" y="484" text-anchor="end">11h</text>
<g fill="#666"><circle cx="1079" cy="514" r="2.400"/><circle cx="1089" cy="514" r="2.400"/><circle cx="1099" cy="514" r="2.400"/></g>

<rect x="540" y="523.500" width="515" height="96" rx="10" fill="#fff" stroke="#e4e3e0"/>
<g clip-path="url(#cI)">
<rect x="540" y="523" width="132" height="97" fill="#1890b4"/>
<path d="M540 523H640L620 530L580 536L540 540Z" fill="#2a2326"/>
<path d="M592 523 L604 523 L604 529 L592 532Z" fill="#e84a52"/>
<path d="M540 538 L572 536 L572 604 L540 604Z" fill="#a5bccb"/>
<path d="M542 590 Q538 552 552 545 Q564 560 558 590Z" fill="#6f9a6e"/>
<path d="M544 560l3 2-2 3zM552 570l3 2-2 3z" fill="#e8e0a0"/>
<rect x="540" y="600" width="132" height="16" fill="#1a8fc2"/>
<rect x="540" y="616" width="132" height="4" fill="#16459c"/>
<text x="610" y="545" font-size="9.500" fill="#fff" transform="rotate(-22 610 545)">Inspir Vita Nova</text>
<text x="607" y="556" font-size="9.500" fill="#fff" transform="rotate(-22 607 556)">So Begins New Life</text>
<path d="M640 596 Q650 570 672 560 V612 H652Z" fill="#dd1f2a"/>
<path d="M606 580h24v22h-24zM580 584h20v18h-20zM562 586h14v16h-14z" fill="#c81d28"/>
<g fill="#262c3a"><path d="M652 564l12-4 8 6v28l-8 16-8-4 2-14-10 2z"/><path d="M622 572h12l4 22-18 4 2 12h-6l-4-18 10-4z"/><path d="M602 578h10l4 14-10 2 2 14h-6l-4-16z"/><path d="M584 580h8l3 12-6 4 1 12h-5l-3-18z"/></g>
<path d="M636 566h12l3 24-14 2z" fill="#3d5a30"/><path d="M604 578h9l2 12h-12z" fill="#d98c20"/><path d="M566 578h11l3 14h-13z" fill="#e6c9c2"/>
<path d="M566 592h14l2 16h-5l-1-10h-9z" fill="#d8b8a8"/><path d="M590 594h14l4 16h-6l-2-10h-8z" fill="#a59180"/>
<path d="M572 604h30M554 604h8M610 610h14" stroke="#1a1a1a" stroke-width="1.500"/>
<g fill="#e0b59a"><circle cx="662" cy="554" r="5" fill="#d3c7bb"/><circle cx="629" cy="567" r="4.500"/><circle cx="642" cy="560" r="4.500"/><circle cx="608" cy="573" r="4"/><circle cx="588" cy="575" r="4"/><circle cx="571" cy="573" r="4"/></g>
</g>
<text class="t" x="682.500" y="564" textLength="354.500" lengthAdjust="spacingAndGlyphs">In a highly significant and influential meeting</text>
<text class="t" x="682.500" y="589" textLength="343" lengthAdjust="spacingAndGlyphs">held in Estonia, we delved into the crucial...</text>
<text x="540" y="644.500" font-size="15" fill="#666" textLength="77.700" lengthAdjust="spacingAndGlyphs">3 Reactions</text>

<g clip-path="url(#cJ)">
<rect x="460" y="691" width="70" height="70" fill="#b8c9bd"/>
<rect x="460" y="691" width="14" height="70" fill="#6d5a48"/><rect x="505" y="691" width="9" height="70" fill="#3f322a"/><rect x="514" y="691" width="16" height="70" fill="#7da699"/>
<path d="M460 761 Q470 748 492 745 Q516 748 526 761Z" fill="#6d4a32"/>
<path d="M474 724 Q472 700 491 698 Q510 700 508 724 Q505 706 491 707 Q478 707 474 724Z" fill="#d6d2c6"/>
<ellipse cx="491" cy="724" rx="16.500" ry="22" fill="#c4876c"/>
<path d="M474 720 Q476 704 491 704 Q506 704 508 720 Q500 710 491 710 Q482 710 474 720Z" fill="#cfc8ba"/>
<path d="M481 722h6M496 722h6" stroke="#6a4030" stroke-width="1.500"/><path d="M491 725v6" stroke="#a86a50" stroke-width="1.500"/><path d="M485 736h12" stroke="#7a4836" stroke-width="1.400"/>
</g>
<text class="t" x="540" y="732" textLength="102" lengthAdjust="spacingAndGlyphs">John Fellows</text>
<text class="tb" x="647.500" y="732" textLength="106.500" lengthAdjust="spacingAndGlyphs">followed you</text>
<text class="tm" x="1103" y="709" text-anchor="end">11h</text>
<g fill="#666"><circle cx="1079" cy="739" r="2.400"/><circle cx="1089" cy="739" r="2.400"/><circle cx="1099" cy="739" r="2.400"/></g>

<g clip-path="url(#cA)">
<rect x="460" y="804" width="70" height="70" fill="#b9b7ab"/>
<path d="M476 862 Q474 812 495 808 Q516 812 514 862Z" fill="#efe3c4"/>
<ellipse cx="495" cy="828" rx="10.500" ry="14" fill="#e8c2a8"/>
<path d="M470 874 Q472 852 488 848 L495 860 L502 848 Q518 852 520 874Z" fill="#fbfbf8"/>
<path d="M487 825h6M497 825h6" stroke="#666" stroke-width="1.200"/>
</g>
<text class="tb" x="540" y="822" textLength="72" lengthAdjust="spacingAndGlyphs">Ave Kütt</text>
<text class="t" x="617" y="822" textLength="19" lengthAdjust="spacingAndGlyphs">an</text>
<rect x="540" y="838" width="515" height="1" fill="#e4e3e0"/>
<rect x="540" y="839" width="100" height="30" fill="#8a6a4c"/>
<path d="M540 869v-20q3-10 12-10v30z" fill="#fff"/><path d="M545 869v-22h4v22z" fill="#222"/>
<path d="M590 840h10v28h-10z" fill="#a08870"/><ellipse cx="604" cy="854" rx="7" ry="9" fill="#cfa68a"/><path d="M592 869q12-8 24 0z" fill="#2e2e34"/><ellipse cx="580" cy="864" rx="7" ry="7" fill="#cfaa90"/>

<!-- right footer -->
<text class="fl" x="1217.700" y="253" textLength="41.500" lengthAdjust="spacingAndGlyphs">About</text>
<text class="fl" x="1280" y="253" textLength="83" lengthAdjust="spacingAndGlyphs">Accessibility</text>
<text class="fl" x="1383" y="253" textLength="81" lengthAdjust="spacingAndGlyphs">Help Center</text>
<text class="fl" x="1228.700" y="284" textLength="106.300" lengthAdjust="spacingAndGlyphs">Privacy &amp; Terms</text>
<path d="M1344 276h10l-5 5z" fill="#666"/>
<text class="fl" x="1379" y="284" textLength="74" lengthAdjust="spacingAndGlyphs">Ad Choices</text>
<text class="fl" x="1221" y="315" textLength="77" lengthAdjust="spacingAndGlyphs">Advertising</text>
<text class="fl" x="1319" y="315" textLength="118" lengthAdjust="spacingAndGlyphs">Business Services</text>
<path d="M1446 307h10l-5 5z" fill="#666"/>
<text class="fl" x="1243" y="345" textLength="140" lengthAdjust="spacingAndGlyphs">Get the LinkedIn app</text>
<text class="fl" x="1404" y="345" textLength="35" lengthAdjust="spacingAndGlyphs">More</text>
<text x="1206" y="391" font-size="18" class="b" fill="#0a66c2" textLength="50" lengthAdjust="spacingAndGlyphs">Linked</text>
<rect x="1258" y="376" width="18" height="18" rx="1.500" fill="#0a66c2"/><text x="1260.500" y="391" font-size="17" class="b" fill="#fff" textLength="13" lengthAdjust="spacingAndGlyphs">in</text>
<text x="1280" y="390" font-size="15.500" fill="#222" textLength="195" lengthAdjust="spacingAndGlyphs">LinkedIn Corporation © 2023</text>

<!-- scrollbar -->
<rect x="1579" y="138" width="16" height="730" fill="#f1f1f1"/>
<rect x="1579" y="449" width="16" height="156" fill="#c1c1c1"/>
<path d="M1582 150l4-4 4 4z" fill="#505050"/><path d="M1582 856l4 4 4-4z" fill="#505050"/>
<path d="M1564 520v17l4-4 3 6 2-1-3-6h5z" fill="#111" stroke="#fff" stroke-width=".8"/>

<!-- chat tabs -->
<path d="M637 868V816a8 8 0 0 1 8-8H899a8 8 0 0 1 8 8V868Z" fill="#0a66c2"/>
<circle cx="667" cy="838" r="20" fill="#0e1622"/>
<g clip-path="url(#cP)"><ellipse cx="667" cy="831" rx="7" ry="9" fill="#c89a84"/><path d="M660 826q7-8 14 0l-2-3q-5-4-10 0z" fill="#d0d0d0"/><path d="M650 860q17-22 34 0z" fill="#1a2238"/><path d="M665 842l2 14 2-14z" fill="#b01c2a"/></g>
<text x="702.500" y="842" font-size="17" class="b" fill="#fff" textLength="147" lengthAdjust="spacingAndGlyphs">Patrick L:. McBr...</text>
<path d="M870 831l14 15M884 831l-14 15" stroke="#fff" stroke-width="2"/>
<path d="M926.500 868V816a8 8 0 0 1 8-8H1189a8 8 0 0 1 8 8V868Z" fill="#fff" stroke="#dcdbd8"/>
<circle cx="957" cy="838" r="20" fill="#5a6670"/>
<g clip-path="url(#cB)"><path d="M945 850q-3-30 12-30t12 30z" fill="#1b1d22"/><ellipse cx="957" cy="834" rx="7" ry="9" fill="#d5a98e"/><path d="M940 860q17-20 34 0z" fill="#1e2c4a"/><path d="M951 845l6 12 6-12z" fill="#eee"/></g>
<text x="992" y="842" font-size="17" class="b" fill="#191919" textLength="139.600" lengthAdjust="spacingAndGlyphs">Jelena Babadzan</text>
<path d="M1160 831l14 15M1174 831l-14 15" stroke="#555" stroke-width="2"/>
<path d="M1217 868V816a8 8 0 0 1 8-8H1569a8 8 0 0 1 8 8V868Z" fill="#0a66c2"/>
<circle cx="1247" cy="838" r="20" fill="url(#face)"/>
<g clip-path="url(#cM)"><path d="M1227 818h40v10q-20-6-40 0z" fill="#2a1006"/><path d="M1246 832h2.500v11h-2.500z" fill="#5a2208"/><path d="M1232 852q15 7 30 0v8h-30z" fill="#b2541a"/></g>
<text x="1277.500" y="842" font-size="17" class="b" fill="#fff" textLength="87.500" lengthAdjust="spacingAndGlyphs">Messaging</text>
<circle cx="1386" cy="838" r="9" fill="#cc1016"/><text x="1386" y="843" text-anchor="middle" font-size="13" class="b" fill="#fff">1</text>
<g fill="#fff"><circle cx="1460" cy="838" r="1.800"/><circle cx="1467" cy="838" r="1.800"/><circle cx="1474" cy="838" r="1.800"/></g>
<path d="M1510 832h-9v14h13v-8M1506 841l1-4 8-7 3 3-8 7z" fill="none" stroke="#fff" stroke-width="2"/>
<path d="M1540 842 L1547 835 L1555 842" fill="none" stroke="#fff" stroke-width="2.400"/>
</g>

<!-- BOTTOM PANEL -->
<rect y="872" width="1600" height="28" fill="#0f5c2c"/>
<rect x="0" y="872" width="19" height="28" rx="4" fill="#2b2f2b"/><path d="M12 880 L7 886 L12 892" stroke="#ddd" stroke-width="1.300" fill="none"/>
<rect x="21" y="878" width="22" height="19" rx="2" fill="url(#teal)"/>
<rect x="61" y="878" width="12" height="18" rx="1" fill="#a5d4b5"/><path d="M63 882h8M63 886h8M63 890h6" stroke="#3a7a55"/>
<text class="tsk" x="84" y="893" textLength="44.600" lengthAdjust="spacingAndGlyphs">[*U...</text>
<rect x="141" y="879" width="13" height="17" rx="2" fill="#3f7a58"/><path d="M144 884h7M144 888h7M144 892h7" stroke="#7aa98c"/>
<text class="tsk" x="165" y="893" textLength="39" lengthAdjust="spacingAndGlyphs">[Vi...</text>
<rect x="221" y="880" width="16" height="15" rx="2" fill="#2e3330"/><text x="223" y="889" font-size="8" fill="#ddd">&gt;-</text>
<text class="tsk" x="246" y="893" textLength="42" lengthAdjust="spacingAndGlyphs">ma...</text>
<rect x="303" y="880" width="16" height="15" rx="2" fill="#2a5a3e"/><text x="305" y="889" font-size="8" fill="#7da68c">&gt;-</text>
<text class="tsk" x="328" y="893" textLength="38" lengthAdjust="spacingAndGlyphs">[m...</text>
<rect x="384" y="879" width="16" height="18" rx="1" fill="#6e3520"/><text x="392" y="893" text-anchor="middle" font-size="14" class="b" fill="#cfd6c8">Fz</text>
<text class="tsk" x="410" y="893" textLength="40" lengthAdjust="spacingAndGlyphs">[vh...</text>
<path d="M465 881a2 2 0 0 1 2-2h5l2 2h7v14a1 1 0 0 1-1 1h-14a1 1 0 0 1-1-1z" fill="#8a9490"/>
<text class="tsk" x="490" y="893" textLength="47" lengthAdjust="spacingAndGlyphs">100...</text>
<rect x="550" y="878" width="10" height="19" rx="1" fill="#0a3a22"/>
<text class="tsk" x="572.500" y="893" textLength="40.500" lengthAdjust="spacingAndGlyphs">[Ps...</text>
<rect x="628" y="882" width="15" height="11" fill="#2a5a3e"/>
<text class="tsk" x="653.500" y="893" textLength="41.500" lengthAdjust="spacingAndGlyphs">[Sc...</text>
<rect x="710" y="881" width="16" height="12" fill="#a8d0b5"/><rect x="718" y="886" width="8" height="7" fill="#2e5a3e"/>
<text class="tsk" x="735" y="893" textLength="40.500" lengthAdjust="spacingAndGlyphs">[Sc...</text>
<rect x="795" y="880" width="15" height="15" rx="2" fill="#2a5a3e"/>
<text class="tsk" x="816" y="893" textLength="39" lengthAdjust="spacingAndGlyphs">[m...</text>
<rect x="872" y="879" width="15" height="16" rx="1" fill="#6c7d78"/><path d="M877 883l6 4-6 4z" fill="#2e3d38"/>
<text class="tsk" x="897" y="893" textLength="43" lengthAdjust="spacingAndGlyphs">[Ke...</text>
<rect x="949" y="872" width="81" height="28" fill="#2a2c2c"/>
<ellipse cx="962" cy="886" rx="5.500" ry="7" fill="none" stroke="#eee" stroke-width="3"/>
<text class="tsk" x="978.600" y="893" textLength="43.400" lengthAdjust="spacingAndGlyphs">(1) ...</text>
<circle cx="1043" cy="886" r="7.500" fill="#3a3f42"/><circle cx="1043" cy="886" r="3" fill="#bcc2c6"/>
<text class="tsk" x="1060" y="893" textLength="37" lengthAdjust="spacingAndGlyphs">So...</text>
<circle cx="1124" cy="886" r="7.500" fill="#2a9dc0"/><path d="M1120 886l8-3-1 7-3-2-1 2z" fill="#e8f4f8"/>
<text class="tsk b" x="1140" y="893" textLength="46" lengthAdjust="spacingAndGlyphs">[λT...</text>
<circle cx="1206" cy="886" r="7.500" fill="#9a7ae0"/><g fill="#e6dcf8"><circle cx="1203" cy="883" r="1.300"/><circle cx="1209" cy="884" r="1.300"/><circle cx="1206" cy="888" r="1.300"/></g>
<text class="tsk" x="1223" y="893" textLength="40" lengthAdjust="spacingAndGlyphs">Ne...</text>
<circle cx="1287" cy="886" r="7.500" fill="#244f3c"/><circle cx="1288" cy="885" r="3.500" fill="#3e8a70"/>
<text class="tsk" x="1304" y="893" textLength="37" lengthAdjust="spacingAndGlyphs">[Si...</text>
<rect x="1357.500" y="873.500" width="48" height="26" fill="#6c9c9c" stroke="#dde8e8"/>
<ellipse cx="1382" cy="886" rx="6" ry="7.500" fill="none" stroke="#e8eeee" stroke-width="3"/>
<rect x="1406" y="872" width="48" height="28" fill="#0d4a20"/>
<rect x="1455" y="872" width="49" height="28" fill="#0d4a20"/>
<rect x="1505" y="872" width="50" height="28" fill="#0d4a20"/>
<rect x="1560" y="875" width="16" height="22" rx="2" fill="#c6cbc8"/><rect x="1561" y="875" width="14" height="4" fill="#e8eae8"/><path d="M1564 885l4-3 4 3-2 6h-4z" fill="#2ea043"/>
<rect x="1581" y="872" width="19" height="28" rx="4" fill="#2b2f2b"/><path d="M1588 880 L1593 886 L1588 892" stroke="#ddd" stroke-width="1.300" fill="none"/>
</svg>
</body></html>
